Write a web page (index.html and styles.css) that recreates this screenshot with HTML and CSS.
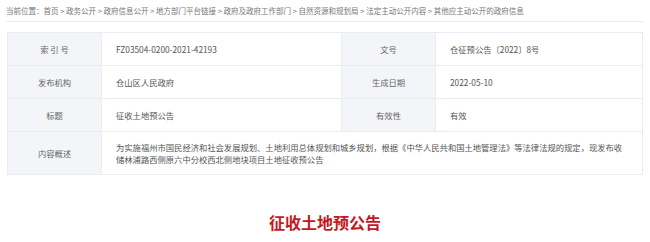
FILE: index.html
```html
<!DOCTYPE html>
<html lang="zh-CN">
<head>
  <meta charset="UTF-8">
  <title>征收土地预公告</title>
  <link rel="stylesheet" href="styles.css">
</head>
<body>
  <!-- breadcrumb -->
  <div class="crumb">当前位置：首页 &gt; 政务公开 &gt; 政府信息公开 &gt; 地方部门平台链接 &gt; 政府及政府工作部门 &gt; 自然资源和规划局 &gt; 法定主动公开内容 &gt; 其他应主动公开的政府信息</div>

  <!-- info table -->
  <table class="info">
    <colgroup>
      <col class="c-label">
      <col class="c-val1">
      <col class="c-label">
      <col>
    </colgroup>
    <tr>
      <td class="label">索 引 号</td>
      <td class="val">FZ03504-0200-2021-42193</td>
      <td class="label">文号</td>
      <td class="val">仓征预公告〔2022〕8号</td>
    </tr>
    <tr>
      <td class="label">发布机构</td>
      <td class="val">仓山区人民政府</td>
      <td class="label">生成日期</td>
      <td class="val">2022-05-10</td>
    </tr>
    <tr>
      <td class="label">标题</td>
      <td class="val">征收土地预公告</td>
      <td class="label">有效性</td>
      <td class="val">有效</td>
    </tr>
    <tr class="summary">
      <td class="label">内容概述</td>
      <td class="val" colspan="3">为实施福州市国民经济和社会发展规划、土地利用总体规划和城乡规划，根据《中华人民共和国土地管理法》等法律法规的规定，现发布收储林浦路西侧原六中分校西北侧地块项目土地征收预公告</td>
    </tr>
  </table>

  <h1 class="doc-title">征收土地预公告</h1>
</body>
</html>
```

FILE: styles.css
```css
* {
  margin: 0;
  padding: 0;
  box-sizing: border-box;
}

body {
  font-family: "Noto Sans CJK SC", "Noto Sans", sans-serif;
  background: #fff;
  color: #555;
}

/* breadcrumb */
.crumb {
  margin: 0 6px;
  height: 22px;
  line-height: 21px;
  font-size: 7.5px;
  color: #777;
  border-bottom: 1px solid #ececec;
  white-space: nowrap;
}

/* info table */
.info {
  margin: 10px 0 0 7px;
  width: 636px;
  border-collapse: collapse;
  table-layout: fixed;
  font-size: 8.3px;
}

.c-label {
  width: 94px;
}

.c-val1 {
  width: 240px;
}

.info td {
  height: 33px;
  border: 1px solid #e9ecf0;
  vertical-align: middle;
}

.info .label {
  background-color: #f3f5f9;
  text-align: center;
  color: #666;
}

.info .val {
  padding: 0 16px 0 14px;
  color: #555;
}

.summary td {
  height: 43px;
}

.summary .val {
  line-height: 12px;
}

.doc-title {
  margin-top: 37px;
  text-align: center;
  font-size: 16px;
  line-height: 20px;
  font-weight: bold;
  color: #c8161d;
}
```
